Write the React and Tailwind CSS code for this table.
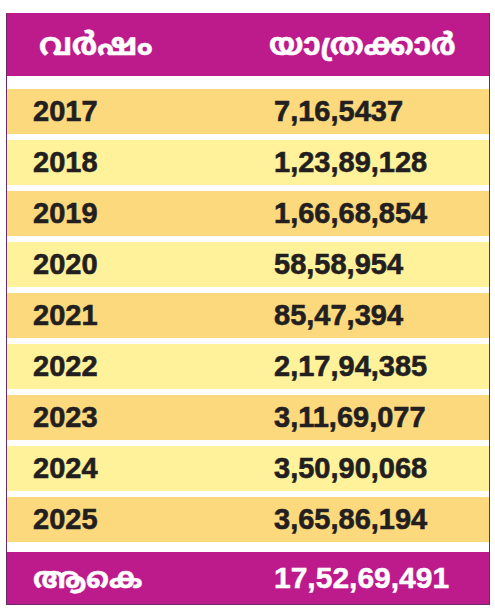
const ROWS = [
  ['2017', '7,16,5437'],
  ['2018', '1,23,89,128'],
  ['2019', '1,66,68,854'],
  ['2020', '58,58,954'],
  ['2021', '85,47,394'],
  ['2022', '2,17,94,385'],
  ['2023', '3,11,69,077'],
  ['2024', '3,50,90,068'],
  ['2025', '3,65,86,194'],
]

const FONT = { fontFamily: '"Liberation Sans", "Noto Sans Malayalam", "Noto Sans", sans-serif' }

export default function App() {
  return (
    <div className="w-[495px] h-[611px] bg-white pt-[13px]" style={FONT}>
      <div className="ml-[6px] w-[484px] border-x-[1.5px] border-b-[1.5px] border-[#6a2b6a] flex flex-col">
        {/* header */}
        <div className="h-[63px] bg-[#bd1a8b] flex items-center text-white font-bold leading-none [-webkit-text-stroke:0.5px_white]">
          <div className="w-[262px] pl-[32px] text-[31px]">വർഷം</div>
          <div className="text-[30px]">യാത്രക്കാർ</div>
        </div>

        <div className="h-[13px]" />

        <div className="flex flex-col gap-[6px]">
          {ROWS.map(([year, count], i) => (
            <div
              key={year}
              className={`h-[45px] flex items-center font-bold text-[29px] leading-none text-[#231f20] [-webkit-text-stroke:0.6px_#231f20] ${
                i % 2 === 0 ? 'bg-[#fdd97e]' : 'bg-[#fff29b]'
              }`}
            >
              <div className="w-[267px] pl-[26px]">{year}</div>
              <div>{count}</div>
            </div>
          ))}
        </div>

        <div className="h-[10px]" />

        {/* total */}
        <div className="h-[52px] bg-[#bd1a8b] flex items-center text-white font-bold leading-none [-webkit-text-stroke:0.5px_white]">
          <div className="w-[267px] pl-[26px] text-[29px]">ആകെ</div>
          <div className="text-[30px]">17,52,69,491</div>
        </div>
      </div>
    </div>
  )
}
